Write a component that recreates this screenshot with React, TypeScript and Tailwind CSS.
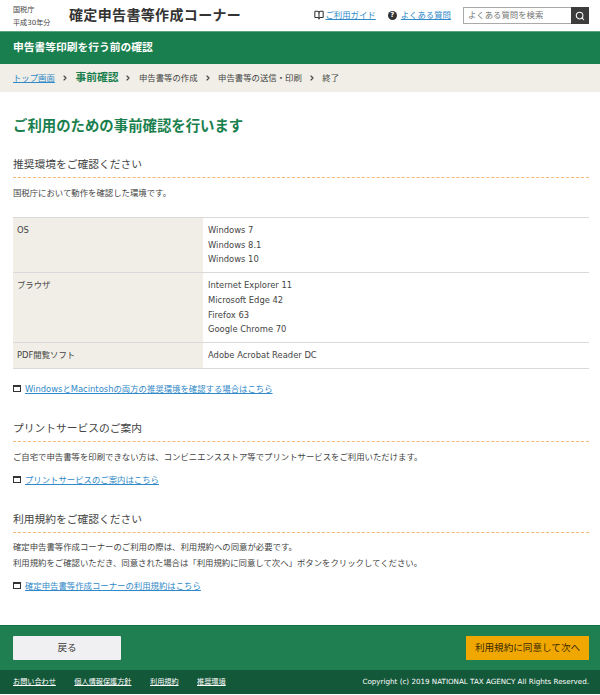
import { BookOpen, ChevronRight, Search } from "lucide-react";

const LATIN_CJK = "font-['DejaVu_Sans','Noto_Sans_CJK_JP',sans-serif]";

function WindowIcon() {
  return (
    <span className="mr-[4px] inline-block h-[7px] w-[8px] shrink-0 border-[1.5px] border-t-[2.5px] border-[#333] bg-white" />
  );
}

function SectionHeading({ children }: { children: string }) {
  return (
    <h2 className="border-b border-dashed border-[#f5b878] pb-[3px] text-[10.75px] leading-[18px] text-[#444]">
      {children}
    </h2>
  );
}

function InfoLink({ children }: { children: string }) {
  return (
    <p className="flex items-center text-[8.4px] leading-[14px] text-[#3089c8]">
      <WindowIcon />
      <a className="underline">{children}</a>
    </p>
  );
}

function EnvRow({ label, values }: { label: string; values: string[] }) {
  return (
    <div className="flex border-b border-[#d9d9d9]">
      <div className="w-[190px] bg-[#f0eee6] px-[4px] py-[5px] text-[8.4px] leading-[14.7px]">{label}</div>
      <div className="flex-1 px-[5px] py-[5px] text-[8.4px] leading-[14.7px]">
        {values.map((v) => (
          <p key={v}>{v}</p>
        ))}
      </div>
    </div>
  );
}

function Crumb() {
  return <ChevronRight size={8} strokeWidth={3.5} className="ml-[6px] mr-[6.5px] text-[#444]" />;
}

export default function App() {
  return (
    <div className={`flex h-[695px] w-[600px] flex-col bg-white text-[#444] ${LATIN_CJK}`}>
      {/* Header */}
      <header className="flex h-[31px] items-center pl-[13px] pr-[11px]">
        <div className="w-[56px] text-[7.1px] leading-[13px] text-[#444]">
          <p>国税庁</p>
          <p>平成30年分</p>
        </div>
        <p className="text-[14px] font-bold tracking-[0.35px] text-[#333]">確定申告書等作成コーナー</p>
        <nav className="ml-auto flex items-center text-[8.4px] text-[#3089c8]">
          <BookOpen size={10} strokeWidth={2.5} className="mr-[2px] text-[#333]" />
          <a className="mr-[12px] underline">ご利用ガイド</a>
          <span className="mr-[4px] flex h-[9px] w-[9px] items-center justify-center rounded-full bg-[#333] text-[7px] font-bold text-white">?</span>
          <a className="mr-[12px] underline">よくある質問</a>
        </nav>
        <div className="flex h-[17px] w-[126px] border border-[#aaa]">
          <span className="flex-1 pl-[4px] text-[8.4px] leading-[15px] text-[#777]">よくある質問を検索</span>
          <span className="flex h-[17px] w-[18px] -translate-y-[1px] translate-x-[1px] items-center justify-center bg-[#3c3c3c]">
            <Search size={10} strokeWidth={2.5} className="text-white" />
          </span>
        </div>
      </header>

      {/* Title band */}
      <div className="flex h-[33px] items-center border-t border-[#5aa47e] bg-[#1a7f4e] pl-[13px] text-[10.75px] font-bold text-white">
        申告書等印刷を行う前の確認
      </div>

      {/* Breadcrumb */}
      <div className="flex h-[28px] items-center bg-[#f0eee6] pl-[13px] text-[8.4px]">
        <a className="text-[#3089c8] underline">トップ画面</a>
        <Crumb />
        <span className="text-[10.75px] font-bold text-[#1a7f4e]">事前確認</span>
        <Crumb />
        <span>申告書等の作成</span>
        <Crumb />
        <span>申告書等の送信・印刷</span>
        <Crumb />
        <span>終了</span>
      </div>

      {/* Main */}
      <main className="flex-1 pl-[13px] pr-[11px]">
        <h1 className="mt-[23px] text-[14.4px] font-bold leading-[22px] text-[#1a7f4e]">ご利用のための事前確認を行います</h1>

        <div className="mt-[19px]">
          <SectionHeading>推奨環境をご確認ください</SectionHeading>
          <p className="mt-[8px] text-[8.4px] leading-[14px]">国税庁において動作を確認した環境です。</p>
          <div className="mt-[17px] border-t border-[#d9d9d9]">
            <EnvRow label="OS" values={["Windows 7", "Windows 8.1", "Windows 10"]} />
            <EnvRow
              label="ブラウザ"
              values={["Internet Explorer 11", "Microsoft Edge 42", "Firefox 63", "Google Chrome 70"]}
            />
            <EnvRow label="PDF閲覧ソフト" values={["Adobe Acrobat Reader DC"]} />
          </div>
          <div className="mt-[13px]">
            <InfoLink>WindowsとMacintoshの両方の推奨環境を確認する場合はこちら</InfoLink>
          </div>
        </div>

        <div className="mt-[24px]">
          <SectionHeading>プリントサービスのご案内</SectionHeading>
          <p className="mt-[8px] text-[8.4px] leading-[15px]">
            ご自宅で申告書等を印刷できない方は、コンビニエンスストア等でプリントサービスをご利用いただけます。
          </p>
          <div className="mt-[8px]">
            <InfoLink>プリントサービスのご案内はこちら</InfoLink>
          </div>
        </div>

        <div className="mt-[24px]">
          <SectionHeading>利用規約をご確認ください</SectionHeading>
          <div className="mt-[6px] text-[8.4px] leading-[16px]">
            <p>確定申告書等作成コーナーのご利用の際は、利用規約への同意が必要です。</p>
            <p>利用規約をご確認いただき、同意された場合は「利用規約に同意して次へ」ボタンをクリックしてください。</p>
          </div>
          <div className="mt-[8px]">
            <InfoLink>確定申告書等作成コーナーの利用規約はこちら</InfoLink>
          </div>
        </div>
      </main>

      {/* Footer buttons */}
      <div className="flex h-[45px] items-center justify-between border-t border-[#15703f] bg-[#1f7f50] pl-[13px] pr-[11px]">
        <button className="h-[24px] w-[108px] rounded-[1px] bg-[#f0f0f2] text-[9.6px] text-[#333]">戻る</button>
        <button className="h-[24px] w-[123px] bg-[#f0a800] text-[9.6px] text-[#3a2a00]">利用規約に同意して次へ</button>
      </div>

      {/* Footer links */}
      <footer className="mb-[1px] flex h-[24px] items-center justify-between bg-[#14583a] pl-[13px] pr-[11px] text-[7.15px] text-white">
        <div className="flex gap-[18.5px]">
          <a className="underline">お問い合わせ</a>
          <a className="underline">個人情報保護方針</a>
          <a className="underline">利用規約</a>
          <a className="underline">推奨環境</a>
        </div>
        <p>Copyright (c) 2019 NATIONAL TAX AGENCY All Rights Reserved.</p>
      </footer>
    </div>
  );
}
